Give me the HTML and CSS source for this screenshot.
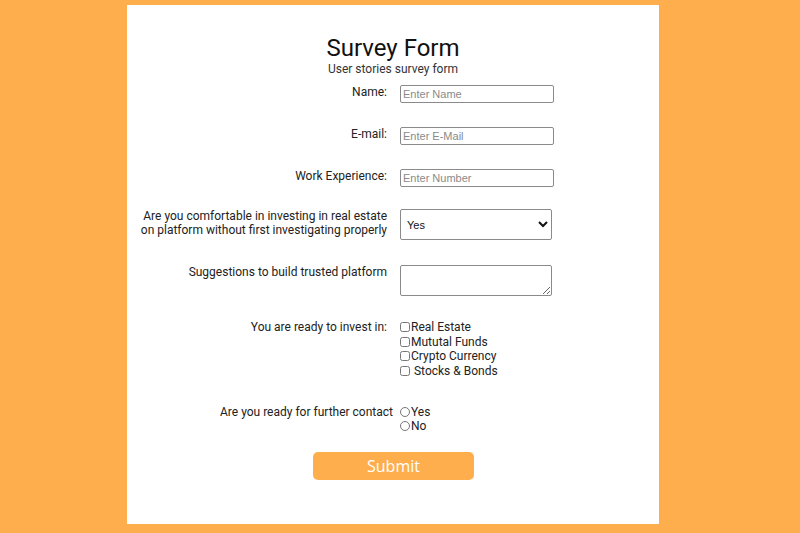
FILE: index.html
```html
<!DOCTYPE html>
<html lang="en">
<head>
<meta charset="utf-8">
<title>Survey Form</title>
<link rel="stylesheet" href="styles.css">
</head>
<body>
<main class="card">
  <h1 class="title">Survey Form</h1>
  <p class="subtitle">User stories survey form</p>
  <form class="form">
    <div class="row">
      <label class="label" for="name">Name:</label>
      <input class="text-input" id="name" type="text" placeholder="Enter Name">
    </div>
    <div class="row">
      <label class="label" for="email">E-mail:</label>
      <input class="text-input" id="email" type="email" placeholder="Enter E-Mail">
    </div>
    <div class="row row-exp">
      <label class="label" for="exp">Work Experience:</label>
      <input class="text-input" id="exp" type="number" placeholder="Enter Number">
    </div>
    <div class="row row-select">
      <label class="label" for="comfort">Are you comfortable in investing in real estate on platform without first investigating properly</label>
      <select class="select" id="comfort">
        <option>Yes</option>
        <option>No</option>
      </select>
    </div>
    <div class="row">
      <label class="label" for="sugg">Suggestions to build trusted platform</label>
      <textarea class="textarea" id="sugg"></textarea>
    </div>
    <div class="row row-checks">
      <span class="label">You are ready to invest in:</span>
      <div class="options">
        <label class="option"><input class="check" type="checkbox">Real Estate</label>
        <label class="option"><input class="check" type="checkbox">Mututal Funds</label>
        <label class="option"><input class="check" type="checkbox">Crypto Currency</label>
        <label class="option"><input class="check" type="checkbox"> Stocks &amp; Bonds</label>
      </div>
    </div>
    <div class="row row-radios">
      <span class="label label-wide">Are you ready for further contact</span>
      <div class="options options-radio">
        <label class="option"><input class="radio" type="radio" name="contact">Yes</label>
        <label class="option"><input class="radio" type="radio" name="contact">No</label>
      </div>
    </div>
    <div class="actions">
      <button class="submit" type="submit">Submit</button>
    </div>
  </form>
</main>
</body>
</html>
```

FILE: styles.css
```css
html, body {
  margin: 0;
  padding: 0;
}
body {
  background: #ffae4e;
  font-family: Roboto, "Liberation Sans", sans-serif;
  color: #222;
  padding-top: 5px;
  height: 533px;
  box-sizing: border-box;
}
.card {
  background: #ffffff;
  width: 532px;
  height: 519px;
  margin: 0 0 0 127px;
  box-sizing: border-box;
  padding-top: 29px;
}
.title {
  margin: 0;
  text-align: center;
  font: 400 24px/28px Roboto, sans-serif;
  color: #111;
}
.subtitle {
  margin: 0;
  text-align: center;
  font: 400 12px/14px Roboto, sans-serif;
  color: #333;
}
.form {
  margin-top: 9px;
  display: flex;
  flex-direction: column;
}
.row {
  display: flex;
  align-items: flex-start;
  margin-bottom: 24px;
}
.row-exp { margin-bottom: 22px; }
.row-select { margin-bottom: 25px; }
.row-checks { margin-bottom: 27px; }
.row-radios { margin-bottom: 19px; }
.label {
  box-sizing: border-box;
  width: 260px;
  padding: 0 0 0 10px;
  margin-right: 13px;
  text-align: right;
  font-size: 12px;
  line-height: 14px;
  color: #222;
}
.label-wide {
  margin-right: 7px;
  width: 266px;
}
.text-input {
  box-sizing: border-box;
  width: 154px;
  height: 18px;
  margin: 0;
  padding: 1px 2px;
  border: 1px solid #8a8a8a;
  border-radius: 2px;
  font: 11px "Liberation Sans", Arial, sans-serif;
}
.text-input::placeholder {
  color: #8a8a8a;
}
.select {
  box-sizing: border-box;
  width: 152px;
  height: 31px;
  margin: 0;
  border: 1px solid #8a8a8a;
  border-radius: 2px;
  background: #fff;
  padding: 0 2px;
  font: 11px "Liberation Sans", Arial, sans-serif;
  color: #111;
}
.textarea {
  box-sizing: border-box;
  width: 152px;
  height: 31px;
  margin: 0;
  border: 1px solid #8a8a8a;
  border-radius: 2px;
}
.options {
  display: flex;
  flex-direction: column;
}
.option {
  display: block;
  font-size: 12px;
  line-height: 14.5px;
  color: #222;
  white-space: pre;
}
.options-radio .option {
  line-height: 14px;
}
.check, .radio {
  width: 10px;
  height: 10px;
  margin: 0 1px 0 0;
  vertical-align: -1px;
}
.actions {
  display: flex;
  padding-left: 186px;
}
.submit {
  width: 161px;
  height: 28px;
  border: none;
  border-radius: 5px;
  background: #ffae4e;
  color: #fff;
  font: 400 16px/28px "Open Sans", Lato, sans-serif;
  padding: 0;
}
```
